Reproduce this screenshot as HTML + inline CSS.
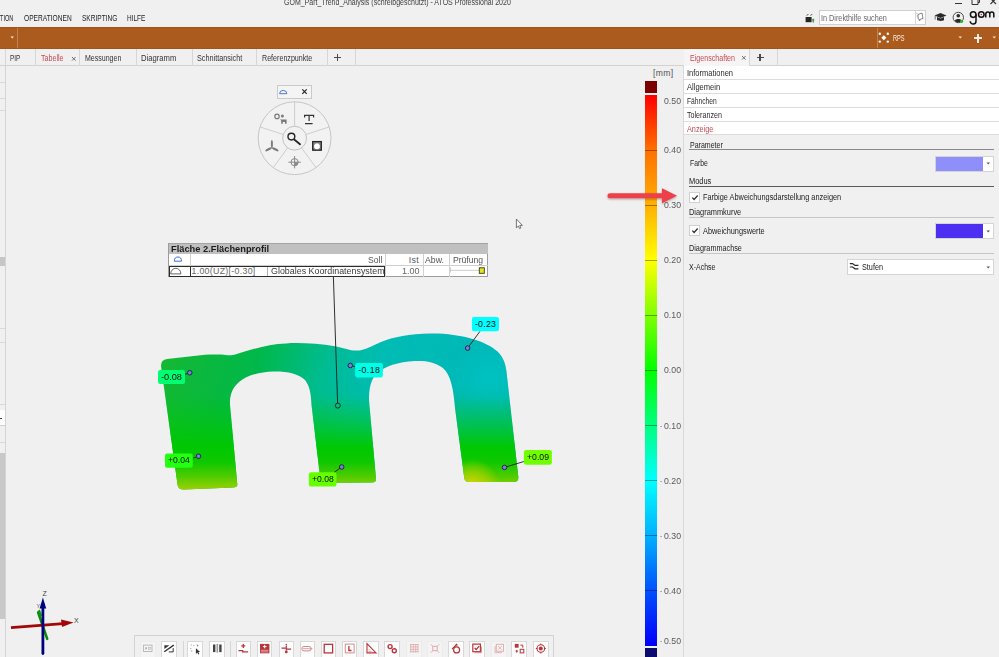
<!DOCTYPE html>
<html><head><meta charset="utf-8">
<style>
*{margin:0;padding:0;box-sizing:border-box}
html,body{width:999px;height:657px;overflow:hidden;background:#f0f0f0;font-family:"Liberation Sans",sans-serif;color:#333;position:relative}
.a{position:absolute}
.t{position:absolute;white-space:pre;transform-origin:0 0}
</style></head><body>
<svg class="a" style="left:0;top:0" width="999" height="657" viewBox="0 0 999 657">
<defs>
<clipPath id="mclip"><path d="M161,366 Q161,359.5 167,359 L205,354.7 C215,354.4 222,354.5 226,355 C229,355.5 232,355.5 236,354.3 C250,350 268,344 286,343.4 C300,342.6 318,343.5 335,346.2 C345,348 350,350.8 357,350.6 C364,350.4 372,346 381,341.9 C393,337 410,334 430,333.5 C460,333 486,341 497.5,351.5 C503.5,357.5 505.6,364 506.5,372 L518.3,476.7 Q518.8,482 514,482 L469,482 Q465,482 464.3,478 L455,408 C453.5,390 451,375 443,368 C435,362 425,360.5 415,361 C398,362 385,366 377,373.6 C371,379 369,388 369,400 L376,479 Q376.3,482.5 372,482.5 L324,483 Q320.6,483 320.4,479.5 L311.5,405 C311,392 309,385 305,380 C299,373.5 287,371.2 273.7,371.4 C258,372 246,376 239,382 C232,388 229.5,396 230,405 L237.3,484.5 Q237.5,487.3 233,487.5 L184,489.5 Q178.2,489.6 177.6,485 Z"/></clipPath>
<linearGradient id="gh" gradientUnits="userSpaceOnUse" x1="175" y1="330" x2="475" y2="420">
<stop offset="0" stop-color="#14b834"/><stop offset="0.28" stop-color="#00b84a"/><stop offset="0.5" stop-color="#00bc94"/>
<stop offset="0.66" stop-color="#00bcb4"/><stop offset="1" stop-color="#00b8b8"/></linearGradient>
<linearGradient id="gv" gradientUnits="userSpaceOnUse" x1="0" y1="380" x2="0" y2="490">
<stop offset="0" stop-color="#00c800" stop-opacity="0"/><stop offset="0.14" stop-color="#00c800" stop-opacity="0.05"/>
<stop offset="0.41" stop-color="#00c800" stop-opacity="0.55"/><stop offset="0.62" stop-color="#00c800" stop-opacity="1"/>
<stop offset="0.75" stop-color="#10c800" stop-opacity="1"/>
<stop offset="0.88" stop-color="#50cc00" stop-opacity="1"/><stop offset="1" stop-color="#a0d000" stop-opacity="1"/></linearGradient>
<radialGradient id="gy" gradientUnits="userSpaceOnUse" cx="472" cy="487" r="28"><stop offset="0" stop-color="#dcd800" stop-opacity="1"/><stop offset="0.4" stop-color="#c8d400" stop-opacity="0.7"/><stop offset="1" stop-color="#e0d800" stop-opacity="0"/></radialGradient>
<radialGradient id="gt" gradientUnits="userSpaceOnUse" cx="490" cy="380" r="40"><stop offset="0" stop-color="#00c4c4" stop-opacity="0.8"/><stop offset="1" stop-color="#00c4c4" stop-opacity="0"/></radialGradient>
</defs>
<g clip-path="url(#mclip)">
<rect x="150" y="320" width="380" height="180" fill="url(#gh)"/>
<rect x="150" y="320" width="380" height="180" fill="url(#gt)"/>
<rect x="150" y="320" width="380" height="180" fill="url(#gv)"/>
<rect x="150" y="320" width="380" height="180" fill="url(#gy)"/>
</g>
</svg>
<svg class="a" style="left:0;top:0" width="999" height="657"><path d="M333.4,277 L337.6,403" stroke="#1a1a1a" stroke-width="0.9" fill="none"/><circle cx="337.8" cy="405.6" r="2.5" fill="none" stroke="#1e1e1e" stroke-width="0.9"/><path d="M185,374.3 L189.75,372.75" stroke="#222" stroke-width="0.9"/><rect x="158" y="370" width="27" height="14" rx="2.2" fill="#00ff70"/><circle cx="189.75" cy="372.75" r="2.3" fill="#7878f0" stroke="#252525" stroke-width="0.9"/><path d="M192.7,458.2 L198.5,456.25" stroke="#222" stroke-width="0.9"/><rect x="165" y="453.5" width="27.75" height="14.25" rx="2.2" fill="#22ff10"/><circle cx="198.5" cy="456.25" r="2.3" fill="#7878f0" stroke="#252525" stroke-width="0.9"/><path d="M334,472.5 L341.7,467" stroke="#222" stroke-width="0.9"/><rect x="308.8" y="472.3" width="27.69999999999999" height="14.300000000000011" rx="2.2" fill="#66ff00"/><circle cx="341.7" cy="467" r="2.3" fill="#7878f0" stroke="#252525" stroke-width="0.9"/><path d="M355.2,366.6 L350.3,365.5" stroke="#222" stroke-width="0.9"/><rect x="355.2" y="363.1" width="27.69999999999999" height="14.299999999999955" rx="2.2" fill="#00ffe8"/><circle cx="350.3" cy="365.5" r="2.3" fill="#7878f0" stroke="#252525" stroke-width="0.9"/><path d="M480,331.3 L467.6,348.1" stroke="#222" stroke-width="0.9"/><rect x="471.9" y="316.9" width="27.100000000000023" height="14.400000000000034" rx="2.2" fill="#00ffff"/><circle cx="467.6" cy="348.1" r="2.3" fill="#7878f0" stroke="#252525" stroke-width="0.9"/><path d="M523.9,461.5 L504.5,467.4" stroke="#222" stroke-width="0.9"/><rect x="523.9" y="449.9" width="28.0" height="14.800000000000011" rx="2.2" fill="#70ff00"/><circle cx="504.5" cy="467.4" r="2.3" fill="#7878f0" stroke="#252525" stroke-width="0.9"/></svg>
<div class="a" style="left:168.2px;top:243px;width:320.3px;height:34.4px;background:#fff;border:1px solid #9c9c9c;border-top-color:#a4a4a4"></div>
<div class="a" style="left:169px;top:244px;width:318.7px;height:9.7px;background:#c0c0c0"></div>
<div class="a" style="left:169px;top:265.2px;width:318.7px;height:1px;background:#cfcfcf"></div>
<div class="a" style="left:190.2px;top:253.7px;width:1px;height:23px;background:#d0d0d0"></div>
<div class="a" style="left:385px;top:253.7px;width:1px;height:23px;background:#d0d0d0"></div>
<div class="a" style="left:422.6px;top:253.7px;width:1px;height:23px;background:#d0d0d0"></div>
<div class="a" style="left:448.6px;top:253.7px;width:1px;height:23px;background:#d0d0d0"></div>
<div class="a" style="left:168.5px;top:265.6px;width:22px;height:11.6px;border:1.6px solid #2c2c2c"></div>
<div class="a" style="left:189.6px;top:265.6px;width:195.4px;height:11.6px;border:1.6px solid #2c2c2c;border-left-width:1.4px"></div>
<svg class="a" style="left:168px;top:253px" width="330" height="25"><path d="M6.3,8.2 a3.6,4.2 0 0 1 7.2,0 z" fill="none" stroke="#3d6fd0" stroke-width="1"/><path d="M2.7,20.9 a5.1,5.6 0 0 1 10.2,0 z" fill="none" stroke="#555" stroke-width="0.9"/><path d="M282.5,14.5 v5 M283,17.4 h28" stroke="#c8c8c8" stroke-width="0.9"/><rect x="311.3" y="14.8" width="5" height="5.5" fill="#e6e61e" stroke="#3a3a10" stroke-width="0.9"/></svg>
<div class="a" style="left:277.2px;top:84.5px;width:35.2px;height:14.8px;background:#f4f4f4;border:1px solid #cacaca"></div>
<svg class="a" style="left:0;top:0" width="999" height="657"><circle cx="294.6" cy="138.2" r="36.4" fill="#f2f2f2" stroke="#c6c6c6" stroke-width="1"/><circle cx="294.6" cy="138.2" r="11.9" fill="#f2f2f2" stroke="#c2c2c2" stroke-width="1"/><path d="M294.60,126.30 L294.60,101.80" stroke="#c8c8c8" stroke-width="0.9"/><path d="M305.92,134.52 L329.22,126.95" stroke="#c8c8c8" stroke-width="0.9"/><path d="M301.59,147.83 L316.00,167.65" stroke="#c8c8c8" stroke-width="0.9"/><path d="M287.61,147.83 L273.20,167.65" stroke="#c8c8c8" stroke-width="0.9"/><path d="M283.28,134.52 L259.98,126.95" stroke="#c8c8c8" stroke-width="0.9"/><circle cx="291.4" cy="136.6" r="3.4" fill="none" stroke="#262626" stroke-width="1.4"/><path d="M293.9,139.2 L300.6,144.7" stroke="#262626" stroke-width="1.8"/><path d="M304.6,117.6 v-2.2 h9 v2.2 M309.1,115.5 v5.6 M305,123.6 h7.6" fill="none" stroke="#333" stroke-width="1.2"/><circle cx="277" cy="116.4" r="2.2" fill="none" stroke="#7a7a7a" stroke-width="1.2"/><circle cx="282.4" cy="116" r="1.5" fill="#7a7a7a"/><path d="M279.3,118.4 L280.6,119.5 h6 v4.2 h-1.6 v-1.8 h-2.2 v1.8 h-1.6 v-3 z" fill="#7a7a7a"/><rect x="312.7" y="141.6" width="8.6" height="8.6" fill="#8a8a8a" stroke="#262626" stroke-width="1.3"/><path d="M315.8,143.6 h2.4 l1.6,1.6 v2.4 l-1.6,1.6 h-2.4 l-1.6,-1.6 v-2.4z" fill="#fff"/><g fill="#7c7c7c"><ellipse cx="271.9" cy="143.9" rx="1" ry="3.9"/><ellipse cx="268.6" cy="149.3" rx="1.2" ry="3.7" transform="rotate(62 268.6 149.3)"/><ellipse cx="275.2" cy="149.3" rx="1.2" ry="3.7" transform="rotate(-62 275.2 149.3)"/></g><circle cx="294.6" cy="162.2" r="3.6" fill="none" stroke="#8a8a8a" stroke-width="1"/><path d="M294.6,156 v12.4 M288.4,162.2 h12.4" stroke="#8a8a8a" stroke-width="1"/><path d="M294.6,162.2 v3.6 a3.6,3.6 0 0 0 3.6,-3.6 z" fill="#8a8a8a"/><path d="M279.6,93.7 a3.6,3.3 0 0 1 7.2,0 z" fill="none" stroke="#4a78d0" stroke-width="1"/><path d="M302.3,89.4 l4.4,4.4 M306.7,89.4 l-4.4,4.4" stroke="#222" stroke-width="1.2"/></svg>
<svg class="a" style="left:0;top:585px" width="90" height="72"><path d="M38.2,27.5 L47.2,53.8" stroke="#0a8a0a" stroke-width="2.6" stroke-linecap="round"/><path d="M37.6,26 l2.4,-1.4 2,6 -2.6,1.2z" fill="#0a9a0a"/><path d="M11,42.6 L63,38.6" stroke="#a30808" stroke-width="2.8"/><path d="M61,34.5 L73.5,37.6 L62,42z" fill="#a30808"/><path d="M42.9,68.6 V19" stroke="#00007e" stroke-width="2.8" stroke-linecap="round"/><path d="M39.6,23.5 L42.9,12.5 L46.2,23.5z" fill="#00007e"/><text x="42.6" y="11.2" font-family="Liberation Sans" font-size="7" fill="#444">Z</text><text x="74" y="38" font-family="Liberation Sans" font-size="7" fill="#444">X</text><text x="36.5" y="23" font-family="Liberation Sans" font-size="5.5" fill="#555">Y</text></svg>
<svg class="a" style="left:514px;top:217px" width="10" height="13"><path d="M2.4,2 V10.8 L4.4,9 L5.6,11.6 L6.8,11 L5.8,8.4 H8.4 Z" fill="#fafafa" stroke="#555" stroke-width="0.8" stroke-linejoin="round"/></svg>
<div class="a" style="left:134.4px;top:635.4px;width:419.6px;height:30px;border:1px solid #d2d2d2;background:#f0f0f0"></div>
<div class="a" style="left:140.0px;top:640.5px;width:15.6px;height:20px;background:#f4f4f4;border:1px solid #ececec"></div>
<div class="a" style="left:161.2px;top:640.5px;width:15.6px;height:20px;background:#fdfdfd;border:1px solid #d8d8d8"></div>
<div class="a" style="left:187.3px;top:640.5px;width:15.6px;height:20px;background:#fdfdfd;border:1px solid #d8d8d8"></div>
<div class="a" style="left:209.4px;top:640.5px;width:15.6px;height:20px;background:#fdfdfd;border:1px solid #d8d8d8"></div>
<div class="a" style="left:235.5px;top:640.5px;width:15.6px;height:20px;background:#fdfdfd;border:1px solid #d8d8d8"></div>
<div class="a" style="left:256.8px;top:640.5px;width:15.6px;height:20px;background:#fdfdfd;border:1px solid #d8d8d8"></div>
<div class="a" style="left:278.5px;top:640.5px;width:15.6px;height:20px;background:#fdfdfd;border:1px solid #d8d8d8"></div>
<div class="a" style="left:299.5px;top:640.5px;width:15.6px;height:20px;background:#fdfdfd;border:1px solid #d8d8d8"></div>
<div class="a" style="left:320.6px;top:640.5px;width:15.6px;height:20px;background:#fdfdfd;border:1px solid #d8d8d8"></div>
<div class="a" style="left:341.9px;top:640.5px;width:15.6px;height:20px;background:#fdfdfd;border:1px solid #d8d8d8"></div>
<div class="a" style="left:363.4px;top:640.5px;width:15.6px;height:20px;background:#fdfdfd;border:1px solid #d8d8d8"></div>
<div class="a" style="left:384.4px;top:640.5px;width:15.6px;height:20px;background:#fdfdfd;border:1px solid #d8d8d8"></div>
<div class="a" style="left:406.4px;top:640.5px;width:15.6px;height:20px;background:#f4f4f4;border:1px solid #ececec"></div>
<div class="a" style="left:427.2px;top:640.5px;width:15.6px;height:20px;background:#f4f4f4;border:1px solid #ececec"></div>
<div class="a" style="left:448px;top:640.5px;width:15.6px;height:20px;background:#fdfdfd;border:1px solid #d8d8d8"></div>
<div class="a" style="left:469.2px;top:640.5px;width:15.6px;height:20px;background:#fdfdfd;border:1px solid #d8d8d8"></div>
<div class="a" style="left:491.3px;top:640.5px;width:15.6px;height:20px;background:#f4f4f4;border:1px solid #ececec"></div>
<div class="a" style="left:511.4px;top:640.5px;width:15.6px;height:20px;background:#fdfdfd;border:1px solid #d8d8d8"></div>
<div class="a" style="left:533px;top:640.5px;width:15.6px;height:20px;background:#fdfdfd;border:1px solid #d8d8d8"></div>
<div class="a" style="left:182.5px;top:641px;width:1px;height:16px;background:#d6d6d6"></div>
<div class="a" style="left:230.3px;top:641px;width:1px;height:16px;background:#d6d6d6"></div>
<svg class="a" style="left:0;top:0" width="999" height="657"><g transform="translate(140.0,640.5)"><rect x="3.4" y="4.6" width="8.6" height="6.4" fill="none" stroke="#b4b4b4" stroke-width="0.9"/><rect x="5" y="6.8" width="2" height="2" fill="#b8b8b8"/><rect x="8.4" y="6.8" width="2" height="2" fill="none" stroke="#b8b8b8" stroke-width="0.7"/></g><g transform="translate(161.2,640.5)"><path d="M3.2,4.8 H8.2 L3.2,8.6z" fill="#333"/><path d="M3,11.3 L12.6,4.6" stroke="#333" stroke-width="1.3"/><path d="M7.6,11.4 H12 V7.6" fill="none" stroke="#333" stroke-width="1"/></g><g transform="translate(187.3,640.5)"><path d="M3.5,4.5 h1 M6.5,4.5 v1 M9.5,4.5 h1 v1.5 M3.5,7.5 v1 M3.5,10.5 h1.5" stroke="#999" stroke-width="0.9"/><path d="M8.6,7.8 V13.4 L10,12 L11,14 L12,13.5 L11,11.6 H12.8 z" fill="#333"/></g><g transform="translate(209.4,640.5)"><rect x="3.6" y="4" width="2.4" height="7.6" fill="#444"/><rect x="7.1" y="3.5" width="1.6" height="8.6" fill="#9a9a9a"/><rect x="9.8" y="4" width="2.4" height="7.6" fill="#444"/></g><g transform="translate(235.5,640.5)"><path d="M7.8,3.4 v4 M5.8,5.4 h4" stroke="#b8353a" stroke-width="1.3"/><path d="M3,10.2 H7.2 V11.4 H12.6" fill="none" stroke="#b8353a" stroke-width="1.3"/></g><g transform="translate(256.8,640.5)"><rect x="3.2" y="3.4" width="9.4" height="9.4" fill="#b8353a"/><path d="M7.9,4.3 v3.6 M6.1,6.1 h3.6" stroke="#fff" stroke-width="1"/><path d="M4,9.8 h7.6 M4,11.4 h7.6" stroke="#f2d0d0" stroke-width="0.7"/></g><g transform="translate(278.5,640.5)"><circle cx="7.8" cy="4" r="0.8" fill="#b8353a"/><path d="M3,7.6 H7.8 M8.2,8.6 H12.6 M7.8,5 V10" stroke="#b8353a" stroke-width="1.2"/><circle cx="7.8" cy="11.4" r="1.4" fill="#b8353a"/></g><g transform="translate(299.5,640.5)"><path d="M4.5,6 h5 a2.2,2.2 0 0 1 0,4.4 h-5 a2.2,2.2 0 0 1 0,-4.4z" fill="none" stroke="#d08a8c" stroke-width="1"/><path d="M3,8.2 h10" stroke="#d08a8c" stroke-width="0.8"/></g><g transform="translate(320.6,640.5)"><rect x="3.6" y="3.8" width="8.4" height="8.6" fill="none" stroke="#b8353a" stroke-width="1.3"/></g><g transform="translate(341.9,640.5)"><rect x="3.4" y="3.6" width="8.8" height="8.8" fill="none" stroke="#d48c8e" stroke-width="1"/><path d="M7,5.6 V10 H9.6" fill="none" stroke="#b8353a" stroke-width="1.3"/></g><g transform="translate(363.4,640.5)"><path d="M3.6,3.2 V12.4 H12.6 z" fill="none" stroke="#b8353a" stroke-width="1.1"/><path d="M5,9.4 h2 M5,11 h3" stroke="#d89a9c" stroke-width="0.8"/></g><g transform="translate(384.4,640.5)"><circle cx="5.7" cy="6.1" r="2" fill="none" stroke="#b8353a" stroke-width="1.4"/><circle cx="9.9" cy="10.3" r="2" fill="none" stroke="#b8353a" stroke-width="1.4"/></g><g transform="translate(406.4,640.5)"><path d="M3.5,4 H12 M3.5,6.4 H12 M3.5,8.8 H12 M3.5,11.2 H12 M4.3,3.5 V12 M6.8,3.5 V12 M9.3,3.5 V12 M11.6,3.5 V12" stroke="#dca0a2" stroke-width="0.7"/></g><g transform="translate(427.2,640.5)"><rect x="5.6" y="5.8" width="4.4" height="4.4" fill="none" stroke="#dca0a2" stroke-width="0.9"/><path d="M3.6,3.8 l1.6,1.6 M12,3.8 l-1.6,1.6 M3.6,12.2 l1.6,-1.6 M12,12.2 l-1.6,-1.6" stroke="#dca0a2" stroke-width="0.9"/></g><g transform="translate(448,640.5)"><circle cx="8.6" cy="9.4" r="3" fill="none" stroke="#b8353a" stroke-width="1.2"/><path d="M4,8.6 L8.6,4 M8,3.4 l1.4,1.6" stroke="#b8353a" stroke-width="1.2"/></g><g transform="translate(469.2,640.5)"><rect x="3.6" y="3.6" width="7.6" height="7.6" fill="#fff" stroke="#b8353a" stroke-width="1.2"/><path d="M12.2,6 V12.2 H5.4" fill="none" stroke="#d48c8e" stroke-width="1"/><path d="M5.4,7.4 L7,9 L10,5.6" fill="none" stroke="#b8353a" stroke-width="1.3"/></g><g transform="translate(491.3,640.5)"><rect x="5" y="3.8" width="7.2" height="7" fill="none" stroke="#e2b2b3" stroke-width="1"/><path d="M3.8,5.6 V12.2 H10.6" fill="none" stroke="#e2b2b3" stroke-width="1"/><path d="M6.8,5.6 l3.6,3.6 M10.4,5.6 l-3.6,3.6" stroke="#e2b2b3" stroke-width="0.9"/></g><g transform="translate(511.4,640.5)"><rect x="3.4" y="3.4" width="3.8" height="3.8" fill="#b8353a"/><rect x="8.8" y="8.8" width="3.6" height="3.6" fill="none" stroke="#b8353a" stroke-width="1"/><path d="M9,4.6 h2.4 v2.6 M4.2,10.6 h2.4 M5.3,9.4 v2.8" fill="none" stroke="#b8353a" stroke-width="1"/></g><g transform="translate(533,640.5)"><circle cx="7.8" cy="8" r="3.8" fill="none" stroke="#b8353a" stroke-width="1.1"/><circle cx="7.8" cy="8" r="2" fill="#b8353a"/><path d="M7.8,3 v1.4 M7.8,11.6 v1.4 M2.8,8 h1.4 M11.4,8 h1.4" stroke="#b8353a" stroke-width="1"/></g></svg>
<div class="a" style="left:0px;top:27px;width:999px;height:22px;background:#ac5b1f;border-top:1px solid #a4531b;border-bottom:1px solid #a4531b"></div>
<div class="a" style="left:17px;top:28px;width:1px;height:20px;background:#c28152"></div>
<div class="a" style="left:877px;top:28px;width:1px;height:20px;background:#c28152"></div>
<div class="a" style="left:0px;top:65px;width:684px;height:1px;background:#d2d2d2"></div>
<div class="a" style="left:749px;top:65px;width:250px;height:1px;background:#d2d2d2"></div>
<div class="a" style="left:5px;top:49px;width:1px;height:17px;background:#d6d6d6"></div>
<div class="a" style="left:35px;top:49px;width:1px;height:17px;background:#d6d6d6"></div>
<div class="a" style="left:79px;top:49px;width:1px;height:17px;background:#d6d6d6"></div>
<div class="a" style="left:136px;top:49px;width:1px;height:17px;background:#d6d6d6"></div>
<div class="a" style="left:192px;top:49px;width:1px;height:17px;background:#d6d6d6"></div>
<div class="a" style="left:256px;top:49px;width:1px;height:17px;background:#d6d6d6"></div>
<div class="a" style="left:327px;top:49px;width:1px;height:17px;background:#d6d6d6"></div>
<div class="a" style="left:355px;top:49px;width:1px;height:17px;background:#d6d6d6"></div>
<div class="a" style="left:5px;top:66px;width:1px;height:591px;background:#d4d4d4"></div>
<div class="a" style="left:0px;top:82px;width:5px;height:1px;background:#d8d8d8"></div>
<div class="a" style="left:0px;top:98px;width:5px;height:1px;background:#d8d8d8"></div>
<div class="a" style="left:0px;top:110px;width:5px;height:1px;background:#d8d8d8"></div>
<div class="a" style="left:0px;top:328px;width:5px;height:1px;background:#d8d8d8"></div>
<div class="a" style="left:0px;top:342px;width:5px;height:1px;background:#d8d8d8"></div>
<div class="a" style="left:0px;top:404px;width:5px;height:1px;background:#d8d8d8"></div>
<div class="a" style="left:0px;top:442px;width:5px;height:1px;background:#d8d8d8"></div>
<div class="a" style="left:0px;top:257px;width:5px;height:9px;background:#c6c6c6"></div>
<div class="a" style="left:0px;top:410px;width:5px;height:16px;background:#fff;border-bottom:1px solid #d0d0d0"></div>
<div class="a" style="left:0px;top:417.5px;width:1.5px;height:1.5px;background:#444"></div>
<div class="a" style="left:0px;top:453px;width:5px;height:166px;background:#c8c8c8"></div>
<div class="a" style="left:683px;top:66px;width:1px;height:591px;background:#d9d9d9"></div>
<div class="a" style="left:684px;top:49px;width:65px;height:17px;background:#f5f5f5"></div>
<div class="a" style="left:749px;top:49px;width:1px;height:17px;background:#d6d6d6"></div>
<div class="a" style="left:777px;top:49px;width:1px;height:17px;background:#d6d6d6"></div>
<div class="a" style="left:684px;top:66px;width:315px;height:14px;background:#fff;border-bottom:1px solid #dcdcdc"></div>
<div class="a" style="left:684px;top:80px;width:315px;height:14px;background:#fff;border-bottom:1px solid #dcdcdc"></div>
<div class="a" style="left:684px;top:94px;width:315px;height:14px;background:#fff;border-bottom:1px solid #dcdcdc"></div>
<div class="a" style="left:684px;top:108px;width:315px;height:14px;background:#fff;border-bottom:1px solid #dcdcdc"></div>
<div class="a" style="left:684px;top:122px;width:315px;height:13px;background:#fff;border-bottom:1px solid #dcdcdc"></div>
<div class="a" style="left:955px;top:3px;width:7px;height:1px;background:#333"></div>
<svg class="a" style="left:971px;top:-3px" width="10" height="9"><path d="M3 0.5h5.5v5h-1.5M1 2.5h6v5h-6z" fill="none" stroke="#333" stroke-width="1"/></svg>
<svg class="a" style="left:989px;top:-2px" width="9" height="8"><path d="M1.5 0.5l5.5 5.5M7 0.5l-5.5 5.5" stroke="#333" stroke-width="1.1"/></svg>
<svg class="a" style="left:804px;top:13px" width="12" height="11"><path d="M1.6 4h6v5.2h-6z" fill="#262626"/><path d="M2 2.6l1.8-1.4h1.2l-1.8 1.4zM5.8 2.6l1.8-1.4h1.2l-1.8 1.4z" fill="#3a3a3a"/><path d="M9.2 5.4l1.6 1.8h-1v2.4h-1.2v-2.4h-1z" fill="#2f8a2f"/></svg>
<div class="a" style="left:819px;top:10px;width:107px;height:15px;background:#fff;border:1px solid #cfcfcf"></div>
<div class="a" style="left:915px;top:11px;width:1px;height:13px;background:#dadada"></div>
<svg class="a" style="left:916px;top:12px" width="9" height="10"><path d="M2 2.5l4-1.5 1 5.5-2.5 .5-1 2-0.5-2-1-0.5z" fill="none" stroke="#777" stroke-width="0.9"/><path d="M0.5 1l1 1M0.5 4h1.2" stroke="#888" stroke-width="0.7"/></svg>
<svg class="a" style="left:934px;top:12px" width="13" height="10"><path d="M0.5 3.5l6-2.5 6 2.5-6 2.5z" fill="#2a2a2a"/><path d="M3 5v3c1.5 1.2 5.5 1.2 7 0v-3l-3.5 1.5z" fill="#2a2a2a"/><path d="M1.2 4v3.5" stroke="#555" stroke-width="0.8"/></svg>
<svg class="a" style="left:952px;top:11px" width="13" height="13"><circle cx="6.3" cy="6.5" r="5.2" fill="none" stroke="#3a3a3a" stroke-width="0.9"/><circle cx="6.3" cy="4.8" r="1.8" fill="#2a2a2a"/><path d="M2.8 10c0.5-2.6 6.5-2.6 7 0c-1.8 1.8-5.2 1.8-7 0z" fill="#2a2a2a"/><circle cx="9.6" cy="10.3" r="1.6" fill="#2db52d"/></svg>
<svg class="a" style="left:968px;top:8px" width="31" height="18"><circle cx="5.2" cy="6.6" r="2.8" fill="none" stroke="#111" stroke-width="1.5"/><path d="M8 6.6V13a2.9 2.9 0 0 1-5.8 0.3" fill="none" stroke="#111" stroke-width="1.5"/><circle cx="13.3" cy="6.5" r="2.8" fill="none" stroke="#111" stroke-width="1.5"/><circle cx="13.3" cy="6.5" r="0.8" fill="#d22"/><path d="M17.8 9.6v-3.6a2 2 0 0 1 4 0v3.6M21.8 6a2 2 0 0 1 4 0v3.6" fill="none" stroke="#111" stroke-width="1.5"/></svg>
<svg class="a" style="left:10px;top:36px" width="5" height="3"><path d="M0.5 0.5h3.5l-1.75 2z" fill="#f3e6da"/></svg>
<svg class="a" style="left:878px;top:32px" width="12" height="11"><g fill="#fff"><circle cx="1.8" cy="1.8" r="1.2"/><circle cx="9.8" cy="1.8" r="1.2"/><circle cx="1.8" cy="9.6" r="1.2"/><circle cx="9.8" cy="9.6" r="1.2"/><path d="M5.8 3.2l2.5 2.5-2.5 2.5-2.5-2.5z"/></g></svg>
<svg class="a" style="left:958px;top:36px" width="5" height="3"><path d="M0.5 0.5h3.5l-1.75 2z" fill="#f3e6da"/></svg>
<svg class="a" style="left:992px;top:36px" width="5" height="3"><path d="M0.5 0.5h3.5l-1.75 2z" fill="#f3e6da"/></svg>
<div class="a" style="left:974px;top:37px;width:8px;height:1.6px;background:#f5ebe2"></div>
<div class="a" style="left:977.2px;top:33.5px;width:1.6px;height:9px;background:#f5ebe2"></div>
<svg class="a" style="left:70.5px;top:55.8px" width="6" height="6"><path d="M1 1l3.6 3.6M4.6 1l-3.6 3.6" stroke="#606060" stroke-width="0.9"/></svg>
<svg class="a" style="left:741px;top:55.3px" width="6" height="6"><path d="M1 1l3.6 3.6M4.6 1l-3.6 3.6" stroke="#606060" stroke-width="0.9"/></svg>
<div class="a" style="left:334.3px;top:57px;width:6.8px;height:1.3px;background:#4a4a4a"></div>
<div class="a" style="left:337.05px;top:54.3px;width:1.3px;height:6.8px;background:#4a4a4a"></div>
<div class="a" style="left:756.6px;top:57px;width:7px;height:1.3px;background:#4a4a4a"></div>
<div class="a" style="left:759.45px;top:54.2px;width:1.3px;height:7px;background:#4a4a4a"></div>
<div class="a" style="left:645px;top:81px;width:12px;height:11.5px;background:#7d0000"></div>
<div class="a" style="left:645px;top:95px;width:12px;height:551px;background:linear-gradient(to bottom,#ff0000 0%,#ff7000 10%,#ffb000 20%,#ffff00 30%,#80ff00 40%,#00ff00 50%,#00ff80 60%,#00ffff 70%,#00b0ff 80%,#0050ff 90%,#0000ff 100%)"></div>
<div class="a" style="left:645px;top:149.6px;width:12px;height:1px;background:rgba(0,0,0,0.35)"></div>
<div class="a" style="left:645px;top:204.7px;width:12px;height:1px;background:rgba(0,0,0,0.35)"></div>
<div class="a" style="left:645px;top:259.8px;width:12px;height:1px;background:rgba(0,0,0,0.35)"></div>
<div class="a" style="left:645px;top:314.9px;width:12px;height:1px;background:rgba(0,0,0,0.35)"></div>
<div class="a" style="left:645px;top:370.0px;width:12px;height:1px;background:rgba(0,0,0,0.35)"></div>
<div class="a" style="left:645px;top:425.1px;width:12px;height:1px;background:rgba(0,0,0,0.35)"></div>
<div class="a" style="left:645px;top:480.2px;width:12px;height:1px;background:rgba(0,0,0,0.35)"></div>
<div class="a" style="left:645px;top:535.3px;width:12px;height:1px;background:rgba(0,0,0,0.35)"></div>
<div class="a" style="left:645px;top:590.4px;width:12px;height:1px;background:rgba(0,0,0,0.35)"></div>
<div class="a" style="left:645px;top:648px;width:12px;height:9px;background:#0c0c70"></div>
<div class="a" style="left:689px;top:149px;width:305px;height:1px;background:#888"></div>
<div class="a" style="left:934.5px;top:155.5px;width:59px;height:16px;background:#fff;border:1px solid #d4d4d4"></div>
<div class="a" style="left:935.5px;top:156.5px;width:47.5px;height:14px;background:#8f8ffb"></div>
<svg class="a" style="left:986px;top:162px" width="5" height="3"><path d="M0.5 0.5h3.5l-1.75 2z" fill="#555"/></svg>
<div class="a" style="left:689px;top:186px;width:305px;height:1px;background:#5a5a5a"></div>
<div class="a" style="left:689px;top:192px;width:11px;height:10.5px;background:#fff;border:1px solid #d0d0d0"></div>
<svg class="a" style="left:690px;top:193px" width="10" height="9"><path d="M2.3 4.6l1.8 1.9 3.6-4" fill="none" stroke="#333" stroke-width="1.3"/></svg>
<div class="a" style="left:689px;top:217px;width:305px;height:1px;background:#c6c6c6"></div>
<div class="a" style="left:689px;top:225px;width:11px;height:10.5px;background:#fff;border:1px solid #d0d0d0"></div>
<svg class="a" style="left:690px;top:226px" width="10" height="9"><path d="M2.3 4.6l1.8 1.9 3.6-4" fill="none" stroke="#333" stroke-width="1.3"/></svg>
<div class="a" style="left:934.5px;top:222.7px;width:59px;height:16.3px;background:#fff;border:1px solid #d4d4d4"></div>
<div class="a" style="left:935.5px;top:223.7px;width:47.5px;height:14.3px;background:#4c2ff0"></div>
<svg class="a" style="left:986px;top:229.5px" width="5" height="3"><path d="M0.5 0.5h3.5l-1.75 2z" fill="#555"/></svg>
<div class="a" style="left:689px;top:253.3px;width:305px;height:1px;background:#c6c6c6"></div>
<div class="a" style="left:846.5px;top:259.4px;width:147.2px;height:15.6px;background:#fff;border:1px solid #d4d4d4"></div>
<svg class="a" style="left:849px;top:261px" width="11" height="10"><path d="M0.8,2.6 h2.8 l2.4,1.8 h3.4 M0.8,6 h2.8 l2.4,1.8 h3.4" fill="none" stroke="#2a2a2a" stroke-width="1.2"/></svg>
<svg class="a" style="left:985.5px;top:266px" width="5" height="3"><path d="M0.5 0.5h3.5l-1.75 2z" fill="#555"/></svg>
<svg class="a" style="left:600px;top:180px" width="85" height="30"><defs><filter id="sh" x="-10%" y="-30%" width="120%" height="160%"><feDropShadow dx="0" dy="1" stdDeviation="0.8" flood-color="#000" flood-opacity="0.35"/></filter></defs><g filter="url(#sh)" fill="#ee3f48"><path d="M10 13.2h53v5h-53a2.5 2.5 0 0 1 0-5z"/><path d="M62 8.2l15 7.5-15 7.5z"/></g></svg>
<div class="t" style="left:161px;top:371.55px;font-size:8.8px;line-height:11.0px;color:#111;font-weight:normal;font-family:'Liberation Sans';transform:scaleX(1.0467);">-0.08</div>
<div class="t" style="left:168px;top:455.18px;font-size:8.8px;line-height:11.0px;color:#111;font-weight:normal;font-family:'Liberation Sans';transform:scaleX(0.9768);">+0.04</div>
<div class="t" style="left:311.8px;top:474.00px;font-size:8.8px;line-height:11.0px;color:#111;font-weight:normal;font-family:'Liberation Sans';transform:scaleX(0.9746);">+0.08</div>
<div class="t" style="left:358.2px;top:364.80px;font-size:8.8px;line-height:11.0px;color:#111;font-weight:normal;font-family:'Liberation Sans';letter-spacing:0.409px;">-0.18</div>
<div class="t" style="left:474.9px;top:318.65px;font-size:8.8px;line-height:11.0px;color:#111;font-weight:normal;font-family:'Liberation Sans';letter-spacing:0.259px;">-0.23</div>
<div class="t" style="left:526.9px;top:451.85px;font-size:8.8px;line-height:11.0px;color:#111;font-weight:normal;font-family:'Liberation Sans';transform:scaleX(0.9881);">+0.09</div>
<div class="t" style="left:171px;top:244.06px;font-size:9.2px;line-height:11.5px;color:#1c1c1c;font-weight:bold;font-family:'Liberation Sans';transform:scaleX(1.0122);">Fläche 2.Flächenprofil</div>
<div class="t" style="left:367.9px;top:254.85px;font-size:8.8px;line-height:11.0px;color:#555;font-weight:normal;font-family:'Liberation Sans';transform:scaleX(0.9815);">Soll</div>
<div class="t" style="left:408.8px;top:254.85px;font-size:8.8px;line-height:11.0px;color:#555;font-weight:normal;font-family:'Liberation Sans';letter-spacing:0.352px;">Ist</div>
<div class="t" style="left:425px;top:254.85px;font-size:8.8px;line-height:11.0px;color:#555;font-weight:normal;font-family:'Liberation Sans';transform:scaleX(0.9959);">Abw.</div>
<div class="t" style="left:452.8px;top:254.85px;font-size:8.8px;line-height:11.0px;color:#555;font-weight:normal;font-family:'Liberation Sans';transform:scaleX(0.9769);">Prüfung</div>
<div class="t" style="left:191.5px;top:266.35px;font-size:8.8px;line-height:11.0px;color:#666;font-weight:normal;font-family:'Liberation Sans';letter-spacing:0.296px;">1.00(UZ)[-0.30]</div>
<div class="t" style="left:267.2px;top:266.35px;font-size:8.8px;line-height:11.0px;color:#333;font-weight:normal;font-family:'Liberation Sans';transform:scaleX(0.5224);">|</div>
<div class="t" style="left:270.6px;top:266.35px;font-size:8.8px;line-height:11.0px;color:#3a3a3a;font-weight:normal;font-family:'Liberation Sans';transform:scaleX(1.0101);">Globales Koordinatensystem</div>
<div class="t" style="left:402px;top:266.35px;font-size:8.8px;line-height:11.0px;color:#666;font-weight:normal;font-family:'Liberation Sans';transform:scaleX(1.0277);">1.00</div>
<div class="t" style="left:284.2px;top:-2.65px;font-size:8.6px;line-height:10.75px;color:#3c3c3c;font-weight:normal;font-family:'Liberation Sans';transform:scaleX(0.8149);">GOM_Part_Trend_Analysis (schreibgeschützt) - ATOS Professional 2020</div>
<div class="t" style="left:0px;top:13.15px;font-size:8.7px;line-height:10.88px;color:#222;font-weight:normal;font-family:'Liberation Sans';transform:scaleX(0.6405);">TION</div>
<div class="t" style="left:23.6px;top:13.15px;font-size:8.7px;line-height:10.88px;color:#222;font-weight:normal;font-family:'Liberation Sans';transform:scaleX(0.7621);">OPERATIONEN</div>
<div class="t" style="left:82px;top:13.15px;font-size:8.7px;line-height:10.88px;color:#222;font-weight:normal;font-family:'Liberation Sans';transform:scaleX(0.7538);">SKRIPTING</div>
<div class="t" style="left:127px;top:13.15px;font-size:8.7px;line-height:10.88px;color:#222;font-weight:normal;font-family:'Liberation Sans';transform:scaleX(0.7431);">HILFE</div>
<div class="t" style="left:10px;top:52.65px;font-size:8.6px;line-height:10.75px;color:#333;font-weight:normal;font-family:'Liberation Sans';transform:scaleX(0.7432);">PIP</div>
<div class="t" style="left:40.5px;top:52.65px;font-size:8.6px;line-height:10.75px;color:#c64a55;font-weight:normal;font-family:'Liberation Sans';transform:scaleX(0.8262);">Tabelle</div>
<div class="t" style="left:85px;top:52.65px;font-size:8.6px;line-height:10.75px;color:#333;font-weight:normal;font-family:'Liberation Sans';transform:scaleX(0.8169);">Messungen</div>
<div class="t" style="left:141px;top:52.65px;font-size:8.6px;line-height:10.75px;color:#333;font-weight:normal;font-family:'Liberation Sans';transform:scaleX(0.8905);">Diagramm</div>
<div class="t" style="left:197px;top:52.65px;font-size:8.6px;line-height:10.75px;color:#333;font-weight:normal;font-family:'Liberation Sans';transform:scaleX(0.8465);">Schnittansicht</div>
<div class="t" style="left:262px;top:52.65px;font-size:8.6px;line-height:10.75px;color:#333;font-weight:normal;font-family:'Liberation Sans';transform:scaleX(0.8288);">Referenzpunkte</div>
<div class="t" style="left:689.5px;top:52.65px;font-size:8.6px;line-height:10.75px;color:#c64a55;font-weight:normal;font-family:'Liberation Sans';transform:scaleX(0.8262);">Eigenschaften</div>
<div class="t" style="left:687px;top:68.04px;font-size:8.4px;line-height:10.5px;color:#2a2a2a;font-weight:normal;font-family:'Liberation Sans';transform:scaleX(0.8981);">Informationen</div>
<div class="t" style="left:687px;top:82.04px;font-size:8.4px;line-height:10.5px;color:#2a2a2a;font-weight:normal;font-family:'Liberation Sans';transform:scaleX(0.9026);">Allgemein</div>
<div class="t" style="left:687px;top:96.04px;font-size:8.4px;line-height:10.5px;color:#2a2a2a;font-weight:normal;font-family:'Liberation Sans';transform:scaleX(0.8000);">Fähnchen</div>
<div class="t" style="left:687px;top:110.04px;font-size:8.4px;line-height:10.5px;color:#2a2a2a;font-weight:normal;font-family:'Liberation Sans';transform:scaleX(0.8515);">Toleranzen</div>
<div class="t" style="left:687px;top:124.04px;font-size:8.4px;line-height:10.5px;color:#c64a55;font-weight:normal;font-family:'Liberation Sans';transform:scaleX(0.8723);">Anzeige</div>
<div class="t" style="left:821.4px;top:13.05px;font-size:8.6px;line-height:10.75px;color:#666;font-weight:normal;font-family:'Liberation Sans';transform:scaleX(0.8462);">In Direkthilfe suchen</div>
<div class="t" style="left:892.6px;top:32.66px;font-size:9.2px;line-height:11.5px;color:#f8eee4;font-weight:normal;font-family:'Liberation Sans';transform:scaleX(0.6136);">RPS</div>
<div class="t" style="left:653px;top:68.15px;font-size:8.6px;line-height:10.75px;color:#555;font-weight:normal;font-family:'Liberation Sans';letter-spacing:0.369px;">[mm]</div>
<div class="t" style="left:664px;top:95.75px;font-size:8.8px;line-height:11.0px;color:#5a5a5a;font-weight:normal;font-family:'Liberation Sans';transform:scaleX(0.9927);">0.50</div>
<div class="t" style="left:664px;top:145.05px;font-size:8.8px;line-height:11.0px;color:#5a5a5a;font-weight:normal;font-family:'Liberation Sans';transform:scaleX(0.9927);">0.40</div>
<div class="t" style="left:664px;top:200.15px;font-size:8.8px;line-height:11.0px;color:#5a5a5a;font-weight:normal;font-family:'Liberation Sans';transform:scaleX(0.9927);">0.30</div>
<div class="t" style="left:664px;top:255.25px;font-size:8.8px;line-height:11.0px;color:#5a5a5a;font-weight:normal;font-family:'Liberation Sans';transform:scaleX(0.9927);">0.20</div>
<div class="t" style="left:664px;top:310.35px;font-size:8.8px;line-height:11.0px;color:#5a5a5a;font-weight:normal;font-family:'Liberation Sans';transform:scaleX(0.9927);">0.10</div>
<div class="t" style="left:664px;top:365.45px;font-size:8.8px;line-height:11.0px;color:#5a5a5a;font-weight:normal;font-family:'Liberation Sans';transform:scaleX(0.9927);">0.00</div>
<div class="t" style="left:659.5px;top:420.55px;font-size:8.8px;line-height:11.0px;color:#5a5a5a;font-weight:normal;font-family:'Liberation Sans';transform:scaleX(0.7830);">-</div>
<div class="t" style="left:664px;top:420.55px;font-size:8.8px;line-height:11.0px;color:#5a5a5a;font-weight:normal;font-family:'Liberation Sans';transform:scaleX(0.9927);">0.10</div>
<div class="t" style="left:659.5px;top:475.65px;font-size:8.8px;line-height:11.0px;color:#5a5a5a;font-weight:normal;font-family:'Liberation Sans';transform:scaleX(0.7830);">-</div>
<div class="t" style="left:664px;top:475.65px;font-size:8.8px;line-height:11.0px;color:#5a5a5a;font-weight:normal;font-family:'Liberation Sans';transform:scaleX(0.9927);">0.20</div>
<div class="t" style="left:659.5px;top:530.75px;font-size:8.8px;line-height:11.0px;color:#5a5a5a;font-weight:normal;font-family:'Liberation Sans';transform:scaleX(0.7830);">-</div>
<div class="t" style="left:664px;top:530.75px;font-size:8.8px;line-height:11.0px;color:#5a5a5a;font-weight:normal;font-family:'Liberation Sans';transform:scaleX(0.9927);">0.30</div>
<div class="t" style="left:659.5px;top:585.85px;font-size:8.8px;line-height:11.0px;color:#5a5a5a;font-weight:normal;font-family:'Liberation Sans';transform:scaleX(0.7830);">-</div>
<div class="t" style="left:664px;top:585.85px;font-size:8.8px;line-height:11.0px;color:#5a5a5a;font-weight:normal;font-family:'Liberation Sans';transform:scaleX(0.9927);">0.40</div>
<div class="t" style="left:659.5px;top:635.75px;font-size:8.8px;line-height:11.0px;color:#5a5a5a;font-weight:normal;font-family:'Liberation Sans';transform:scaleX(0.7830);">-</div>
<div class="t" style="left:664px;top:635.75px;font-size:8.8px;line-height:11.0px;color:#5a5a5a;font-weight:normal;font-family:'Liberation Sans';transform:scaleX(0.9927);">0.50</div>
<div class="t" style="left:689.5px;top:139.64px;font-size:8.4px;line-height:10.5px;color:#222;font-weight:normal;font-family:'Liberation Sans';transform:scaleX(0.8387);">Parameter</div>
<div class="t" style="left:689.5px;top:157.84px;font-size:8.4px;line-height:10.5px;color:#222;font-weight:normal;font-family:'Liberation Sans';transform:scaleX(0.8131);">Farbe</div>
<div class="t" style="left:689.4px;top:175.94px;font-size:8.4px;line-height:10.5px;color:#222;font-weight:normal;font-family:'Liberation Sans';transform:scaleX(0.8870);">Modus</div>
<div class="t" style="left:702.8px;top:191.64px;font-size:8.4px;line-height:10.5px;color:#222;font-weight:normal;font-family:'Liberation Sans';transform:scaleX(0.8782);">Farbige Abweichungsdarstellung anzeigen</div>
<div class="t" style="left:689.4px;top:207.44px;font-size:8.4px;line-height:10.5px;color:#222;font-weight:normal;font-family:'Liberation Sans';transform:scaleX(0.8831);">Diagrammkurve</div>
<div class="t" style="left:702.8px;top:225.54px;font-size:8.4px;line-height:10.5px;color:#222;font-weight:normal;font-family:'Liberation Sans';transform:scaleX(0.8777);">Abweichungswerte</div>
<div class="t" style="left:689.4px;top:243.24px;font-size:8.4px;line-height:10.5px;color:#222;font-weight:normal;font-family:'Liberation Sans';transform:scaleX(0.8674);">Diagrammachse</div>
<div class="t" style="left:689.4px;top:262.04px;font-size:8.4px;line-height:10.5px;color:#222;font-weight:normal;font-family:'Liberation Sans';transform:scaleX(0.8340);">X-Achse</div>
<div class="t" style="left:862px;top:262.04px;font-size:8.4px;line-height:10.5px;color:#222;font-weight:normal;font-family:'Liberation Sans';transform:scaleX(0.8671);">Stufen</div>
</body></html>
